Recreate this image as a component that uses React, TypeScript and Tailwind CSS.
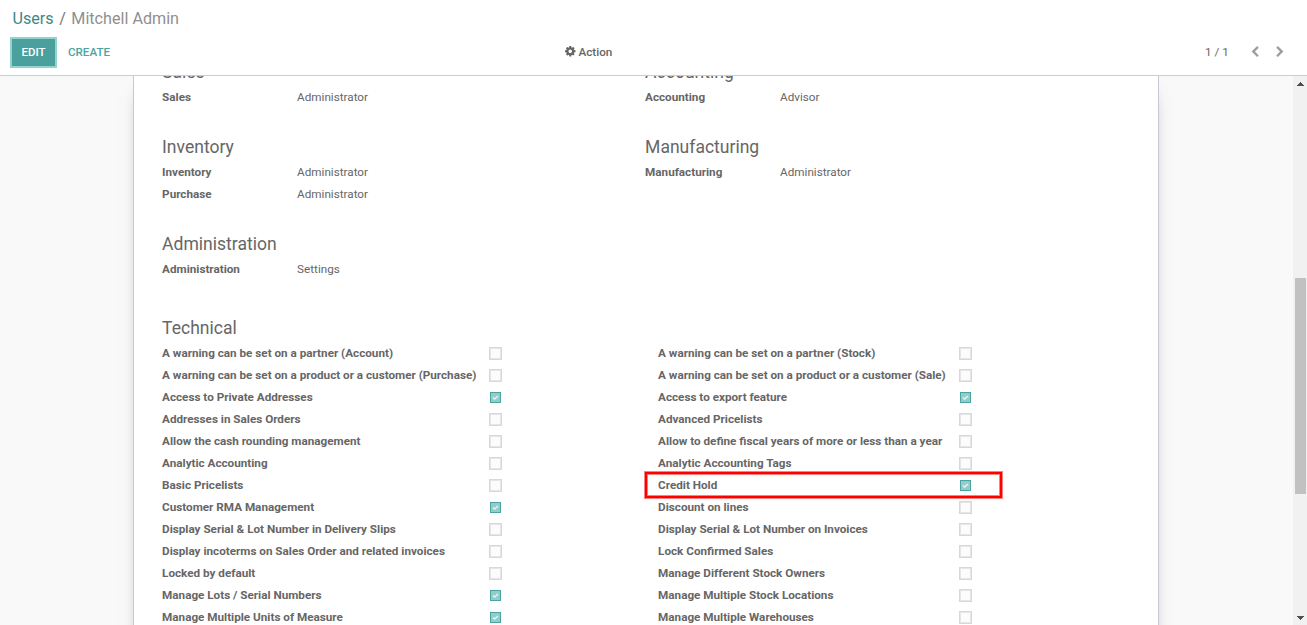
type Field = { label: string; value: string };
type Option = { label: string; checked?: boolean; highlighted?: boolean };

const leftOptions: Option[] = [
  { label: "A warning can be set on a partner (Account)" },
  { label: "A warning can be set on a product or a customer (Purchase)" },
  { label: "Access to Private Addresses", checked: true },
  { label: "Addresses in Sales Orders" },
  { label: "Allow the cash rounding management" },
  { label: "Analytic Accounting" },
  { label: "Basic Pricelists" },
  { label: "Customer RMA Management", checked: true },
  { label: "Display Serial & Lot Number in Delivery Slips" },
  { label: "Display incoterms on Sales Order and related invoices" },
  { label: "Locked by default" },
  { label: "Manage Lots / Serial Numbers", checked: true },
  { label: "Manage Multiple Units of Measure", checked: true },
];

const rightOptions: Option[] = [
  { label: "A warning can be set on a partner (Stock)" },
  { label: "A warning can be set on a product or a customer (Sale)" },
  { label: "Access to export feature", checked: true },
  { label: "Advanced Pricelists" },
  { label: "Allow to define fiscal years of more or less than a year" },
  { label: "Analytic Accounting Tags" },
  { label: "Credit Hold", checked: true, highlighted: true },
  { label: "Discount on lines" },
  { label: "Display Serial & Lot Number on Invoices" },
  { label: "Lock Confirmed Sales" },
  { label: "Manage Different Stock Owners" },
  { label: "Manage Multiple Stock Locations" },
  { label: "Manage Multiple Warehouses" },
];

function CogIcon() {
  return (
    <svg viewBox="0 128 1536 1536" className="size-[10.5px] shrink-0" fill="currentColor">
      <path d="M1024 896q0-106-75-181t-181-75-181 75-75 181 75 181 181 75 181-75 75-181zm512-109v222q0 12-8 23t-20 13l-185 28q-19 54-39 91 35 50 107 138 10 12 10 25t-9 23q-27 37-99 108t-94 71q-12 0-26-9l-138-108q-44 23-91 38-16 136-29 186-7 28-36 28h-222q-14 0-24.5-8.5t-11.5-21.5l-28-184q-49-16-90-37l-141 107q-10 9-25 9-14 0-25-11-126-114-165-168-7-10-7-23 0-12 8-23 15-21 51-66.5t54-70.5q-27-50-41-99l-183-27q-13-2-21-12.5t-8-23.5v-222q0-12 8-23t19-13l186-28q14-46 39-92-40-57-107-138-10-12-10-24 0-10 9-23 26-36 98.5-107.5t94.5-71.5q13 0 26 10l138 107q44-23 91-38 16-136 29-186 7-28 36-28h222q14 0 24.5 8.5t11.5 21.5l28 184q49 16 90 37l142-107q9-9 24-9 13 0 25 10 129 119 165 170 7 8 7 22 0 12-8 23-15 21-51 66.5t-54 70.5q26 50 41 98l183 28q13 2 21 12.5t8 23.5z" />
    </svg>
  );
}

function ChevronLeft() {
  return (
    <svg viewBox="0 0 1792 1792" className="size-[12px] shrink-0" fill="#9a9fa5">
      <path d="M1427 301l-531 531 531 531q19 19 19 45t-19 45l-166 166q-19 19-45 19t-45-19l-742-742q-19-19-19-45t19-45l742-742q19-19 45-19t45 19l166 166q19 19 19 45t-19 45z" />
    </svg>
  );
}

function ChevronRight() {
  return (
    <svg viewBox="0 0 1792 1792" className="size-[12px] shrink-0" fill="#9a9fa5">
      <path d="M1363 877l-742 742q-19 19-45 19t-45-19l-166-166q-19-19-19-45t19-45l531-531-531-531q-19-19-19-45t19-45l166-166q19-19 45-19t45 19l742 742q19 19 19 45t-19 45z" />
    </svg>
  );
}

function Group({ title, fields }: { title: string; fields: Field[] }) {
  return (
    <section className="w-[483px]">
      <h2 className="mb-[3px] h-[22px] text-[17.55px] leading-[22px]">{title}</h2>
      {fields.map((f) => (
        <div key={f.label} className="flex h-[22px] leading-[22px]">
          <span className="w-[135px] font-bold">{f.label}</span>
          <span>{f.value}</span>
        </div>
      ))}
    </section>
  );
}

function Checkbox({ checked }: { checked?: boolean }) {
  if (!checked) {
    return <span className="size-[13px] shrink-0 border border-[#d8d8d8] bg-[#fcfcfc] shadow-[inset_0_0_0_1px_#e6e6e6]" />;
  }
  return (
    <span className="m-px flex size-[11px] shrink-0 items-center justify-center border border-[#4aa5a2] bg-[#93cdca]">
      <svg viewBox="0 0 9 9" className="size-[9px]" fill="none" stroke="#e6f4f3" strokeWidth="1.5">
        <path d="M2 4.5 3.7 6 7 3" />
      </svg>
    </span>
  );
}

function OptionRow({ option, labelWidth }: { option: Option; labelWidth: string }) {
  return (
    <div className="relative flex h-[22px] items-center leading-[22px]">
      <span className={`${labelWidth} shrink-0 font-bold whitespace-nowrap`}>{option.label}</span>
      <Checkbox checked={option.checked} />
      {option.highlighted && (
        <span className="absolute -top-[2px] -left-[13px] h-[26px] w-[357px] border-2 border-[#ff0000] shadow-[0_0_0_1px_#ff000080,inset_0_0_0_1px_#ff000080]" />
      )}
    </div>
  );
}

export default function App() {
  return (
    <div className="flex h-[625px] w-[1307px] flex-col overflow-hidden bg-white font-['Roboto',sans-serif] text-[11.7px] text-[#666666]">
      <header className="h-[76px] shrink-0 border-b border-[#cccccc]">
        <nav className="flex h-[37px] items-center pt-[2px] pl-[12.5px] text-[16.15px]">
          <span className="text-[#3f8784]">Users</span>
          <span className="px-[5.5px] text-[#777777]">/</span>
          <span className="text-[#8f8f8f]">Mitchell Admin</span>
        </nav>
        <div className="flex h-[31px] items-center leading-[22px]">
          <button className="ml-[10px] h-[31px] w-[47px] border-2 border-[#93d3cf] bg-[#4aa09d] pb-[2px] text-[11.5px] font-medium text-white">
            EDIT
          </button>
          <button className="ml-[11px] w-[43px] pb-[2px] text-left text-[11.6px] font-medium whitespace-nowrap text-[#4aa5a0]">
            CREATE
          </button>
          <button className="ml-[454px] flex w-[50px] items-center gap-[3px] pb-[2px] font-medium whitespace-nowrap">
            <CogIcon />
            Action
          </button>
          <span className="ml-[590px] w-[26px] pb-[2px] whitespace-nowrap">1 / 1</span>
          <span className="mb-[2px] ml-[18px] flex gap-[13px]">
            <ChevronLeft />
            <ChevronRight />
          </span>
        </div>
      </header>
      <div className="flex h-[549px] overflow-hidden bg-[#f9f9f9]">
        <div className="w-[133px] shrink-0" />
        <main className="h-[800px] w-[1026px] shrink-0 border-x border-[#c8c8d3] bg-white pl-[28.1px] shadow-[0_5px_20px_-15px_black]">
          <div className="-mt-[15px] flex h-[75px]">
            <Group title="Sales" fields={[{ label: "Sales", value: "Administrator" }]} />
            <Group title="Accounting" fields={[{ label: "Accounting", value: "Advisor" }]} />
          </div>
          <div className="flex h-[97px]">
            <Group
              title="Inventory"
              fields={[
                { label: "Inventory", value: "Administrator" },
                { label: "Purchase", value: "Administrator" },
              ]}
            />
            <Group title="Manufacturing" fields={[{ label: "Manufacturing", value: "Administrator" }]} />
          </div>
          <div className="h-[84px]">
            <Group title="Administration" fields={[{ label: "Administration", value: "Settings" }]} />
          </div>
          <h2 className="mb-[3px] h-[22px] text-[17.55px] leading-[22px]">Technical</h2>
          <div className="flex">
            <div className="w-[496px]">
              {leftOptions.map((o) => (
                <OptionRow key={o.label} option={o} labelWidth="w-[327px]" />
              ))}
            </div>
            <div>
              {rightOptions.map((o) => (
                <OptionRow key={o.label} option={o} labelWidth="w-[301px]" />
              ))}
            </div>
          </div>
        </main>
        <div className="ml-auto flex w-[14px] shrink-0 flex-col items-center bg-[#f1f1f1]">
          <svg className="mt-[4px] h-[7px] w-[7px]" viewBox="0 0 7 7" fill="#505050">
            <path d="M3 2h1v1h1v1h1v1h1v1H0V5h1V4h1V3h1z" />
          </svg>
          <div className="mt-[191px] ml-[2px] h-[216px] w-[11px] self-start bg-[#c1c1c1]" />
          <svg className="mt-[120px] h-[7px] w-[7px]" viewBox="0 0 7 7" fill="#505050">
            <path d="M0 2h7v1H6v1H5v1H4v1H3V5H2V4H1V3H0z" />
          </svg>
        </div>
      </div>
    </div>
  );
}
